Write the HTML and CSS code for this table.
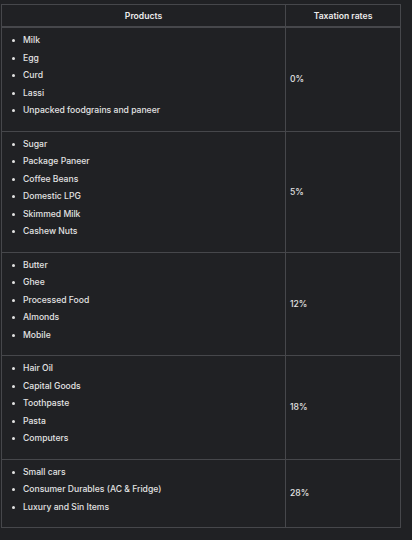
FILE: index.html
```html
<!DOCTYPE html>
<html>
<head>
<meta charset="utf-8">
<link rel="stylesheet" href="styles.css">
</head>
<body>
<table class="gst">
  <thead>
    <tr><th class="c-prod">Products</th><th class="c-rate">Taxation rates</th></tr>
  </thead>
  <tbody>
    <tr>
      <td><ul><li>Milk</li><li>Egg</li><li>Curd</li><li>Lassi</li><li>Unpacked foodgrains and paneer</li></ul></td>
      <td class="rate">0%</td>
    </tr>
    <tr>
      <td><ul><li>Sugar</li><li>Package Paneer</li><li>Coffee Beans</li><li>Domestic LPG</li><li>Skimmed Milk</li><li>Cashew Nuts</li></ul></td>
      <td class="rate">5%</td>
    </tr>
    <tr>
      <td><ul><li>Butter</li><li>Ghee</li><li>Processed Food</li><li>Almonds</li><li>Mobile</li></ul></td>
      <td class="rate">12%</td>
    </tr>
    <tr>
      <td><ul><li>Hair Oil</li><li>Capital Goods</li><li>Toothpaste</li><li>Pasta</li><li>Computers</li></ul></td>
      <td class="rate">18%</td>
    </tr>
    <tr>
      <td><ul><li>Small cars</li><li>Consumer Durables (AC &amp; Fridge)</li><li>Luxury and Sin Items</li></ul></td>
      <td class="rate">28%</td>
    </tr>
  </tbody>
</table>
</body>
</html>
```
FILE: styles.css
```css
html, body {
  margin: 0;
  background: #202124;
}
body {
  padding: 4px 0 0 1px;
  font-family: Inter, "Noto Sans", sans-serif;
  font-size: 8.6px;
  font-weight: 500;
  color: #e3e3e3;
}
.gst {
  border-collapse: collapse;
  width: 400px;
}
.gst th, .gst td {
  border: 1px solid #46474b;
}
.gst th {
  height: 21px;
  padding: 0;
  font-weight: 600;
  text-align: center;
  color: #ececec;
  border-bottom-width: 2px;
}
.c-prod { width: 283px; }
.gst td {
  padding: 4px 0 0 0;
  vertical-align: middle;
}
.gst td.rate {
  padding: 0 0 0 4px;
}
.gst ul {
  margin: 0 0 11px 0;
  padding: 0 0 0 21px;
  list-style: none;
}
.gst li {
  position: relative;
  line-height: 17.5px;
}
.gst li::before {
  content: "";
  position: absolute;
  left: -11px;
  top: 7px;
  width: 3px;
  height: 3px;
  border-radius: 50%;
  background: #e3e3e3;
}
```
